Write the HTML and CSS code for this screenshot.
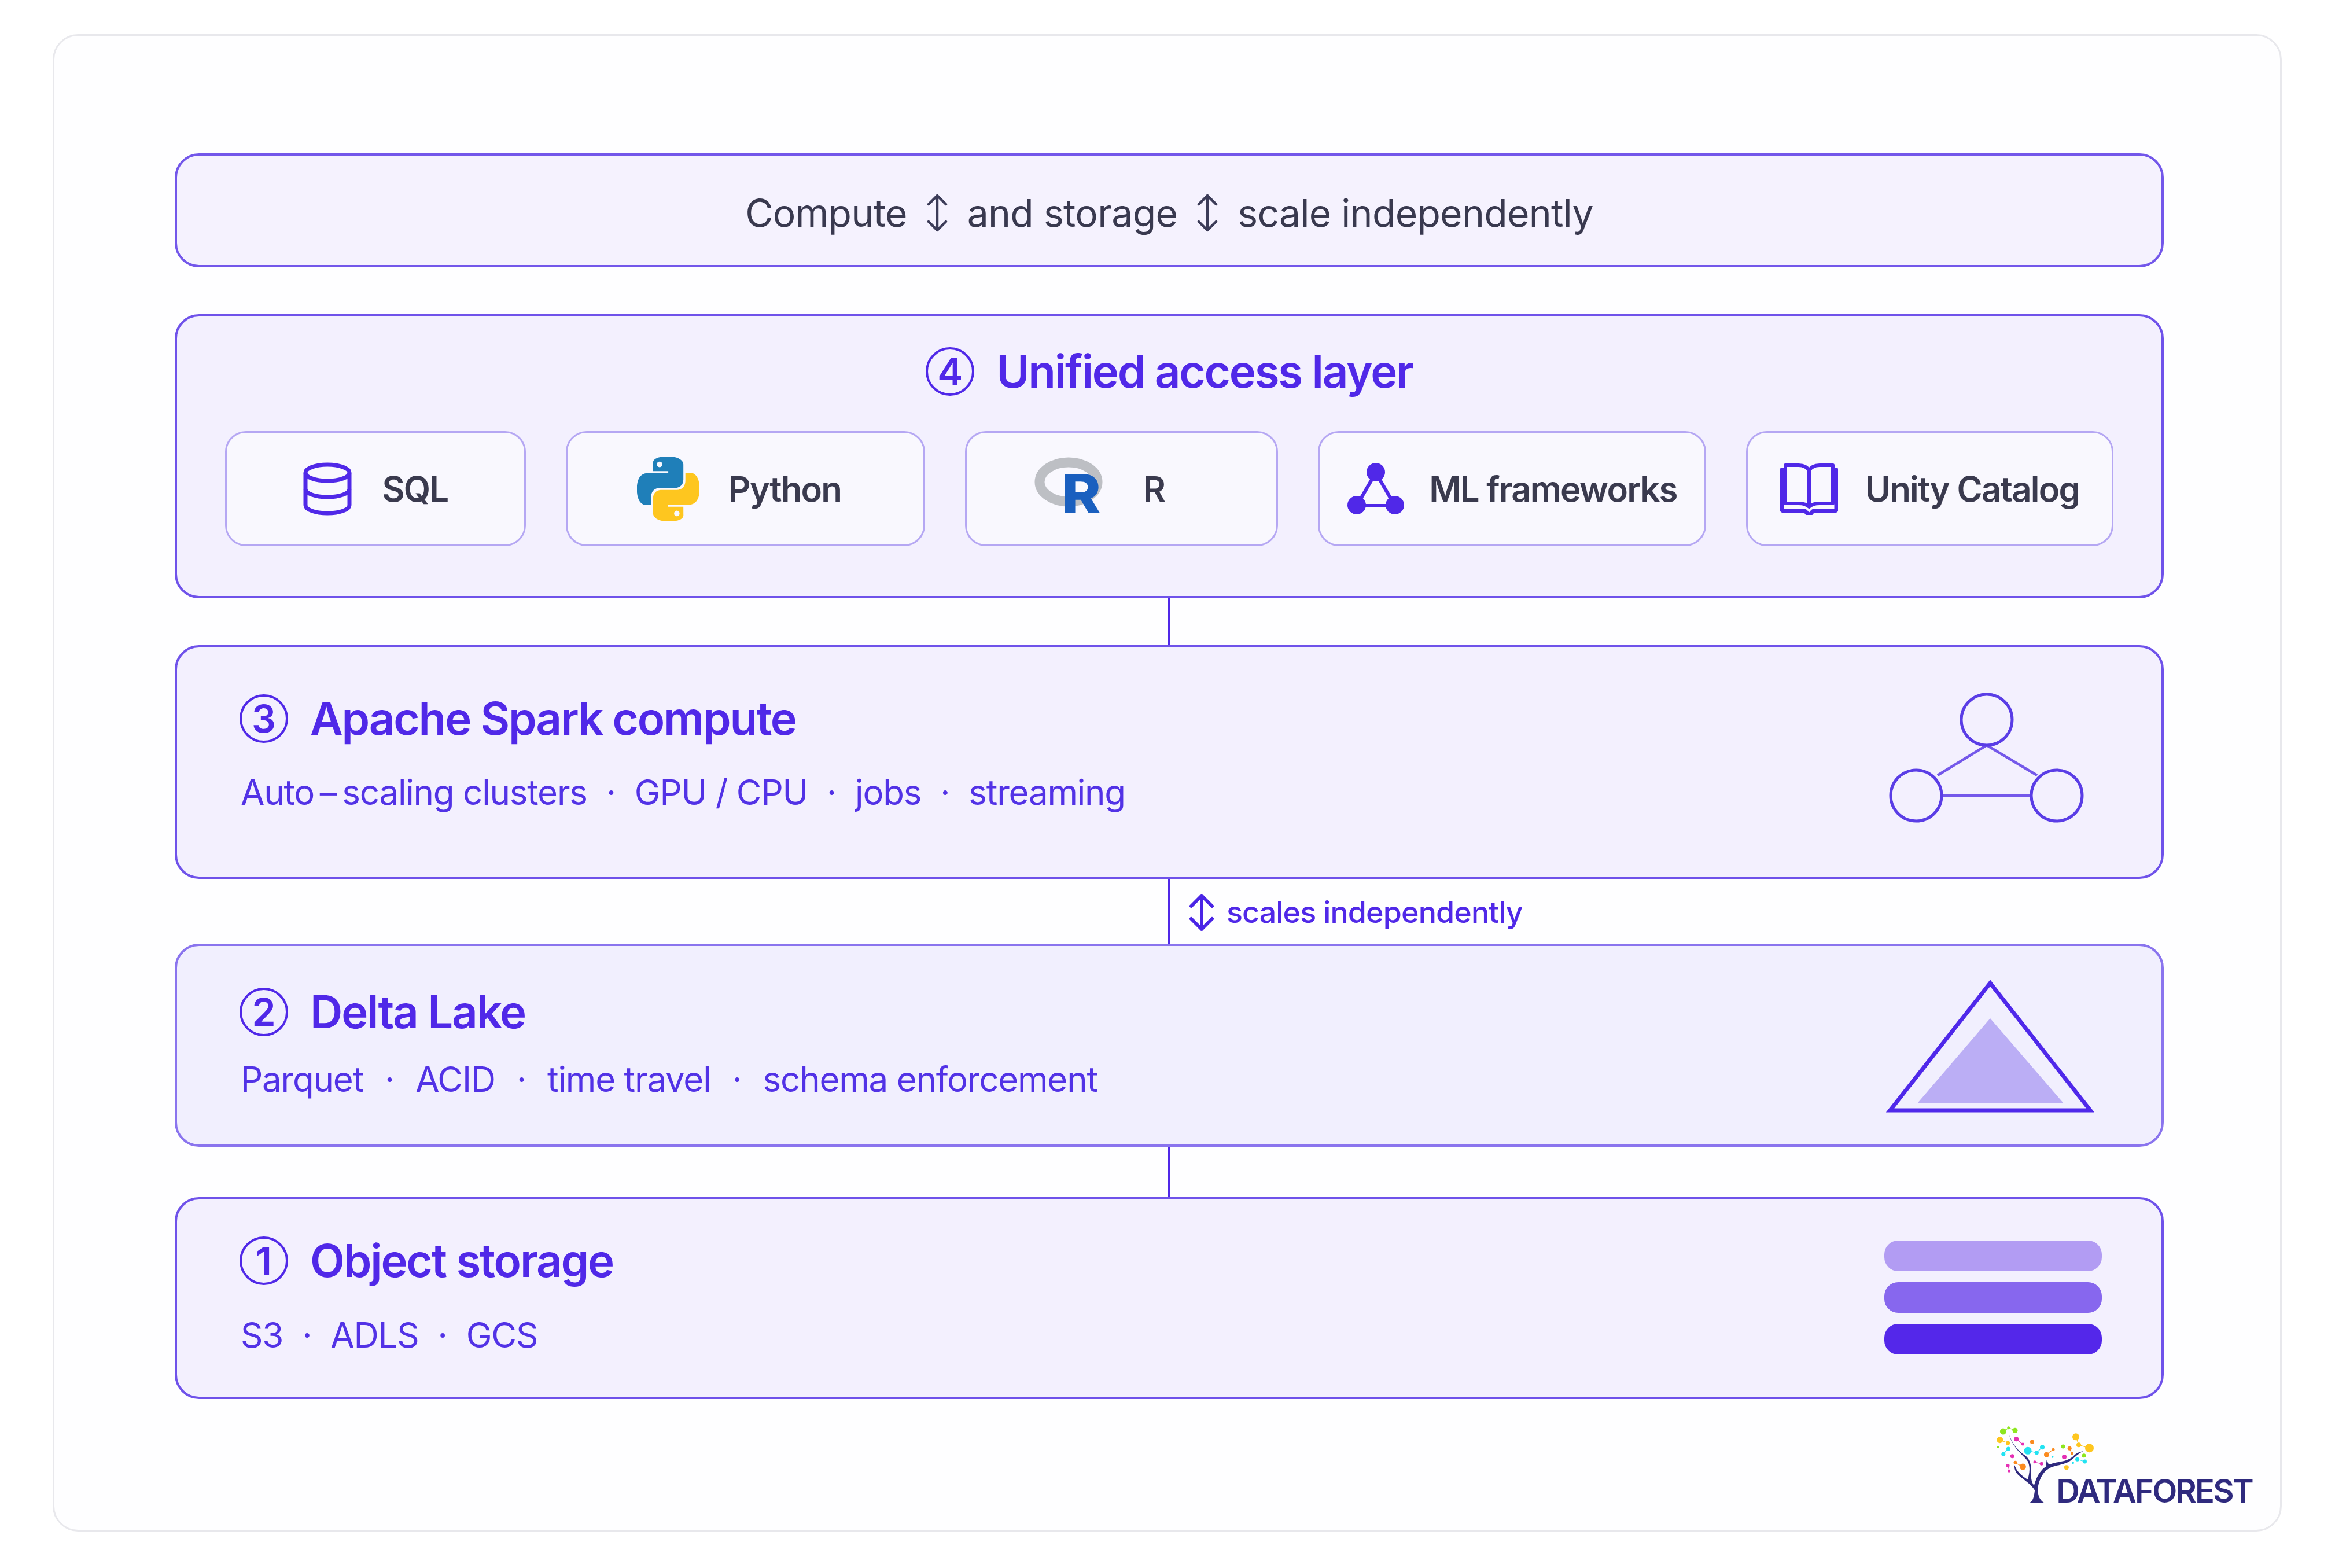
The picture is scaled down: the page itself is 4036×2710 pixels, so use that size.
FILE: index.html
```html
<!DOCTYPE html>
<html lang="en">
  <head>
    <meta charset="UTF-8" />
    <title>Lakehouse architecture</title>
    <link rel="stylesheet" href="styles.css">
  </head>
  <body>
    <main class="card">
      <div class="stack">
        <div class="banner">
          <span>Compute</span>
          <svg class="arrow-dark" viewBox="0 0 36 66"><path d="M18 3V63M3 18L18 3L33 18M3 48L18 63L33 48" /></svg>
          <span>and storage</span>
          <svg class="arrow-dark" viewBox="0 0 36 66"><path d="M18 3V63M3 18L18 3L33 18M3 48L18 63L33 48" /></svg>
          <span>scale independently</span>
        </div>

        <!-- 4 access layer -->
        <section class="layer layer-access">
          <div class="layer-title centered">
            <span class="step">4</span>
            <h2>Unified access layer</h2>
          </div>
          <div class="chips">
            <div class="chip chip-sql">
              <svg class="icon-db" viewBox="0 0 84 92">
                <ellipse cx="42" cy="18" rx="38" ry="14" />
                <path d="M4 18V74C4 82 21 88 42 88C63 88 80 82 80 74V18" />
                <path d="M4 46C4 54 21 60 42 60C63 60 80 54 80 46" />
              </svg>
              <span>SQL</span>
            </div>
            <div class="chip chip-python">
              <svg class="icon-python" viewBox="0 0 24 24" preserveAspectRatio="none">
                <path fill="#1f7fb9" fill-rule="evenodd" d="M14.25.18l.9.2.73.26.59.3.45.32.34.34.25.34.16.33.1.3.04.26.02.2-.01.13V8.5l-.05.63-.13.55-.21.46-.26.38-.3.31-.33.25-.35.19-.35.14-.33.1-.3.07-.26.04-.21.02H8.77l-.69.05-.59.14-.5.22-.41.27-.33.32-.27.35-.2.36-.15.37-.1.35-.07.32-.04.27-.02.21v3.06H3.17l-.21-.03-.28-.07-.32-.12-.35-.18-.36-.26-.36-.36-.35-.46-.32-.59-.28-.73-.21-.88-.14-1.05-.05-1.23.06-1.22.16-1.04.24-.87.32-.71.36-.57.4-.44.42-.33.42-.24.4-.16.36-.1.32-.05.24-.01h.16l.06.01h8.16v-.83H6.18l-.01-2.75-.02-.37.05-.34.11-.31.17-.28.25-.26.31-.23.38-.2.44-.18.51-.15.58-.12.64-.1.71-.06.77-.04.84-.02 1.27.05zm-6.3 1.98l-.23.33-.08.41.08.41.23.34.33.22.41.09.41-.09.33-.22.23-.34.08-.41-.08-.41-.23-.33-.33-.22-.41-.09-.41.09z" />
                <path fill="#fec61f" fill-rule="evenodd" d="M21.04 6.11l.28.06.32.12.35.18.36.27.36.35.35.47.32.59.28.73.21.88.14 1.04.05 1.23-.06 1.23-.16 1.04-.24.86-.32.71-.36.57-.4.45-.42.33-.42.24-.4.16-.36.09-.32.05-.24.02-.16-.01h-8.22v.82h5.84l.01 2.76.02.36-.05.34-.11.31-.17.29-.25.25-.31.24-.38.2-.44.17-.51.15-.58.13-.64.09-.71.07-.77.04-.84.01-1.27-.04-1.07-.14-.9-.2-.73-.25-.59-.3-.45-.33-.34-.34-.25-.34-.16-.33-.1-.3-.04-.25-.02-.2.01-.13v-5.34l.05-.64.13-.54.21-.46.26-.38.3-.32.33-.24.35-.2.35-.14.33-.1.3-.06.26-.04.21-.02.13-.01h5.84l.69-.05.59-.14.5-.21.41-.28.33-.32.27-.35.2-.36.15-.36.1-.35.07-.32.04-.28.02-.21V6.07h2.09l.14.01zm-6.47 14.25l-.23.33-.08.41.08.41.23.33.33.23.41.08.41-.08.33-.23.23-.33.08-.41-.08-.41-.23-.33-.33-.23-.41-.08-.41.08z" />
              </svg>
              <span>Python</span>
            </div>
            <div class="chip chip-r">
              <svg class="icon-r" viewBox="0 0 118 96">
                <ellipse class="r-ring" cx="59" cy="42" rx="50" ry="34" />
                <text class="r-letter" x="47" y="96" textLength="68" lengthAdjust="spacingAndGlyphs">R</text>
              </svg>
              <span>R</span>
            </div>
            <div class="chip chip-ml">
              <svg class="icon-ml" viewBox="0 0 100 90">
                <path d="M50 17L17 74H83Z" />
                <circle cx="50" cy="16" r="16" />
                <circle cx="17" cy="73" r="16" />
                <circle cx="83" cy="73" r="16" />
              </svg>
              <span>ML frameworks</span>
            </div>
            <div class="chip chip-unity">
              <svg class="icon-book" viewBox="0 0 100 90">
                <path class="book-back" d="M9 12H3V80C3 82 4 83 6 83H42C45 83 46 89 50 89C54 89 55 83 58 83H94C96 83 97 82 97 80V12H91" />
                <path d="M9 4H32C41 4 47 8 50 13C53 8 59 4 68 4H91V70H68C59 70 54 72 50 76C46 72 41 70 32 70H9Z" />
                <path d="M50 13V76" />
              </svg>
              <span>Unity Catalog</span>
            </div>
          </div>
        </section>

        <div class="link link-access"><i></i></div>

        <!-- 3 compute -->
        <section class="layer layer-spark">
          <div>
            <div class="layer-title">
              <span class="step">3</span>
              <h2>Apache Spark compute</h2>
            </div>
            <p class="layer-sub">Auto&#8201;–&#8201;scaling clusters<b>·</b>GPU / CPU<b>·</b>jobs<b>·</b>streaming</p>
          </div>
          <svg class="art-spark" viewBox="0 0 344 230">
            <path class="spark-line" d="M172 92L87 144M172 92L259 144M95 179H248" />
            <circle cx="172" cy="48" r="44" />
            <circle cx="50" cy="179" r="44" />
            <circle cx="293" cy="179" r="44" />
          </svg>
        </section>

        <div class="link link-scale">
          <i></i>
          <div class="scale-note">
            <svg viewBox="0 0 42 64"><path d="M21 3V61M3 21L21 3L39 21M3 43L21 61L39 43" /></svg>
            <span>scales independently</span>
          </div>
        </div>

        <!-- 2 delta -->
        <section class="layer layer-delta">
          <div>
            <div class="layer-title">
              <span class="step">2</span>
              <h2>Delta Lake</h2>
            </div>
            <p class="layer-sub">Parquet<b>·</b>ACID<b>·</b>time travel<b>·</b>schema enforcement</p>
          </div>
          <svg class="art-delta" viewBox="0 0 362 232">
            <path class="delta-inner" d="M181 67L55 214H308Z" />
            <path class="delta-outer" d="M181 6L8 226H354Z" />
          </svg>
        </section>

        <div class="link link-storage"><i></i></div>

        <!-- 1 storage -->
        <section class="layer layer-storage">
          <div>
            <div class="layer-title">
              <span class="step">1</span>
              <h2>Object storage</h2>
            </div>
            <p class="layer-sub">S3<b>·</b>ADLS<b>·</b>GCS</p>
          </div>
          <div class="bars">
            <div class="bar bar-light"></div>
            <div class="bar bar-mid"></div>
            <div class="bar bar-dark"></div>
          </div>
        </section>
      </div>

      <div class="brand">
        <div class="brand-logo">
          <svg class="brand-tree" viewBox="0 0 172 135">
            <g class="tree-links">
              <path stroke="#8ee61f" d="M13 10L23 4L34 8" />
              <path stroke="#fec61f" d="M8 25L22 30M139 19L144 33L162 39" />
              <path stroke="#e52fb4" d="M36 23L47 32M68 63L80 66M22 69L24 78" />
              <path stroke="#22e3f2" d="M22 40L14 49M56 43L71 47L81 37M141 58L154 62" />
              <path stroke="#fb8a1e" d="M88 50L100 41M128 39L132 48M34 64L47 71" />
            </g>
            <g fill="#8ee61f"><circle cx="13.4" cy="10" r="5.5" /><circle cx="22.8" cy="3.7" r="2.5" /><circle cx="34" cy="8.3" r="4.5" /><circle cx="4.7" cy="37.3" r="2" /><circle cx="117" cy="36" r="3.5" /><circle cx="153" cy="51.7" r="3.5" /></g>
            <g fill="#fec61f"><circle cx="7.8" cy="24.7" r="5.5" /><circle cx="21.6" cy="30" r="3.5" /><circle cx="139" cy="19.3" r="6" /><circle cx="144" cy="33.3" r="4" /><circle cx="162.5" cy="38.7" r="7.5" /><circle cx="122.8" cy="72.3" r="4" /></g>
            <g fill="#e52fb4"><circle cx="36.2" cy="23.3" r="4" /><circle cx="47.4" cy="32" r="2.5" /><circle cx="29.3" cy="52.7" r="3.5" /><circle cx="119" cy="54" r="4" /><circle cx="68" cy="62.7" r="2.5" /><circle cx="79.7" cy="65.7" r="3" /><circle cx="21.6" cy="69" r="3" /><circle cx="23.7" cy="78.3" r="2.5" /></g>
            <g fill="#22e3f2"><circle cx="22.4" cy="40" r="3.5" /><circle cx="13.8" cy="49.3" r="3.5" /><circle cx="56" cy="43.3" r="6.5" /><circle cx="71.4" cy="46.7" r="3.5" /><circle cx="81" cy="37.3" r="4" /><circle cx="98.7" cy="54" r="1.8" /><circle cx="141.5" cy="58.3" r="3.5" /><circle cx="154.5" cy="62" r="3.5" /><circle cx="134" cy="64.3" r="2" /></g>
            <g fill="#fb8a1e"><circle cx="63.4" cy="28" r="3.5" /><circle cx="88.4" cy="50.3" r="4.5" /><circle cx="100" cy="41.3" r="2.5" /><circle cx="128.2" cy="39.3" r="3.5" /><circle cx="132.5" cy="48" r="2.5" /><circle cx="34.5" cy="63.7" r="3" /><circle cx="47.4" cy="71" r="5.5" /></g>
            <g transform="scale(.431 .3333) translate(-200 -130)">
              <path fill="#2f2a7e" d="M335 530C350 525 355 500 358 465C345 440 330 425 300 395C280 375 275 355 277 335C285 365 300 385 330 410C335 380 342 350 330 315C315 285 270 250 255 175C270 230 290 260 320 285C340 305 345 340 343 370C342 400 345 425 355 440C365 400 375 365 405 340C403 330 404 320 406 308C410 320 412 328 415 332C445 315 490 320 515 285C525 272 540 265 553 263C530 275 520 295 500 312C480 330 445 335 420 348C395 365 380 395 372 440C368 480 372 510 395 530Z" />
            </g>
          </svg>
          <span class="brand-name">DATAFOREST</span>
        </div>
      </div>
    </main>
  </body>
</html>
```

FILE: styles.css
```css
html,
body {
  margin: 0;
  background-color: #fff;
  font-family: Inter, "Noto Sans", sans-serif;
}

.card {
  margin: 59px 92px 0 91px;
  height: 2588px;
  box-sizing: border-box;
  border: 3px solid #e8e8ec;
  border-radius: 44px;
  background-color: #fefeff;
  display: flex;
  flex-flow: column;
}

.stack {
  margin: 203px 201px 0 208px;
  display: flex;
  flex-flow: column;
}

.banner {
  height: 197px;
  box-sizing: border-box;
  margin-bottom: 81px;
  border: 4px solid #7357ea;
  border-radius: 42px;
  background-color: #f5f2fe;
  display: flex;
  align-items: center;
  justify-content: center;
  font-size: 66px;
  letter-spacing: -0.7px;
  color: #39394f;
  padding-top: 8px;
}
.arrow-dark {
  width: 36px;
  height: 66px;
  margin: 0 34px;
}
.arrow-dark path {
  fill: none;
  stroke: #3c3c58;
  stroke-width: 4.5;
  stroke-linecap: round;
  stroke-linejoin: round;
}

/* layers */
.layer {
  box-sizing: border-box;
  border: 4px solid #6f52ea;
  border-radius: 42px;
  background-color: #f3f0fe;
  display: flex;
  justify-content: space-between;
  align-items: flex-start;
}
.layer-access {
  height: 491px;
  display: block;
  padding: 53px 83px 0;
}
.layer-spark {
  height: 404px;
  padding: 81px 130px 0 108px;
}
.layer-delta {
  height: 351px;
  padding: 72px 115px 0 108px;
  border-color: #8a74ee;
  background-color: #f1effe;
}
.layer-storage {
  height: 349px;
  padding: 64px 103px 0 108px;
}

.layer-title {
  display: flex;
  align-items: center;
  gap: 38px;
  color: #5028e8;
}
.layer-title.centered {
  justify-content: center;
}
.layer-title h2 {
  margin: 0;
  font-size: 78px;
  font-weight: 600;
  line-height: 84px;
  letter-spacing: -2.2px;
}
.step {
  width: 84px;
  height: 84px;
  box-sizing: border-box;
  border: 4px solid #5028e8;
  border-radius: 50%;
  display: flex;
  align-items: center;
  justify-content: center;
  font-size: 66px;
  font-weight: 600;
}
.layer-sub {
  margin: 0;
  font-size: 60px;
  letter-spacing: -1.2px;
  line-height: 76px;
  color: #5232e6;
  padding-left: 2px;
}
.layer-sub b {
  font-weight: 400;
  margin: 0 33px;
}
.layer-spark .layer-sub {
  margin-top: 47px;
}
.layer-delta .layer-sub {
  margin-top: 36px;
}
.layer-delta .layer-sub b {
  margin: 0 37px;
}
.layer-storage .layer-sub {
  margin-top: 48px;
}

/* connectors */
.link {
  display: grid;
  grid-template-columns: 1fr 4px 1fr;
}
.link i {
  grid-column: 2;
  background-color: #5028e8;
}
.link-access {
  height: 81px;
}
.link-scale {
  height: 112px;
}
.link-storage {
  height: 87px;
}
.scale-note {
  grid-column: 3;
  padding-left: 33px;
  padding-top: 3px;
  display: flex;
  align-items: center;
  gap: 22px;
  font-size: 52px;
  letter-spacing: -0.9px;
  font-weight: 500;
  color: #5028e8;
}
.scale-note svg {
  width: 42px;
  height: 64px;
}
.scale-note path {
  fill: none;
  stroke: #4a24e6;
  stroke-width: 6;
  stroke-linecap: round;
  stroke-linejoin: round;
}

/* chips */
.chips {
  margin-top: 61px;
  display: grid;
  grid-template-columns: 520px 621px 541px 671px 635px;
  gap: 69px;
}
.chip {
  height: 199px;
  box-sizing: border-box;
  border: 3px solid #b5a7f3;
  border-radius: 36px;
  background-color: #f9f8fe;
  display: flex;
  align-items: center;
  justify-content: center;
  font-size: 60px;
  font-weight: 600;
  letter-spacing: -1.8px;
  color: #3a3a4e;
}
.chip-sql {
  gap: 53px;
}
.chip-python {
  gap: 50px;
  padding-right: 22px;
}
.chip-r {
  gap: 70px;
  padding-right: 76px;
}
.chip-ml {
  gap: 42px;
}
.chip-unity {
  gap: 47px;
}
.icon-db {
  width: 84px;
  height: 92px;
}
.icon-db ellipse,
.icon-db path {
  fill: none;
  stroke: #5028e8;
  stroke-width: 7;
}
.icon-python {
  width: 108px;
  height: 112px;
}
.icon-r {
  width: 118px;
  height: 96px;
  overflow: visible;
  margin-bottom: 12px;
}
.r-ring {
  fill: none;
  stroke: #bdbfc4;
  stroke-width: 17;
}
.r-letter {
  font-family: Inter, sans-serif;
  font-size: 94px;
  font-weight: 800;
  letter-spacing: 0;
  fill: #1a5fbf;
}
.icon-ml {
  width: 100px;
  height: 90px;
}
.icon-ml path {
  fill: none;
  stroke: #5028e8;
  stroke-width: 6;
}
.icon-ml circle {
  fill: #5028e8;
}
.icon-book {
  width: 100px;
  height: 90px;
}
.icon-book path {
  fill: none;
  stroke: #5028e8;
  stroke-width: 6;
  stroke-linejoin: round;
}
.icon-book .book-back {
  stroke-width: 7;
}

/* art on the right of each layer */
.art-spark {
  width: 344px;
  height: 230px;
  margin-top: -4px;
}
.art-spark circle {
  fill: none;
  stroke: #5a3de6;
  stroke-width: 5;
}
.spark-line {
  fill: none;
  stroke: #7458ea;
  stroke-width: 4.5;
}
.art-delta {
  width: 362px;
  height: 232px;
  margin-top: -14px;
}
.delta-outer {
  fill: none;
  stroke: #4f28ea;
  stroke-width: 7;
}
.delta-inner {
  fill: #bbaef5;
}
.bars {
  width: 376px;
  margin-top: 7px;
  display: flex;
  flex-flow: column;
  gap: 19px;
}
.bar {
  height: 53px;
  border-radius: 24px;
}
.bar-light {
  background-color: #b29cf3;
}
.bar-mid {
  background-color: #8767ee;
}
.bar-dark {
  background-color: #5427ea;
}

/* logo */
.brand {
  margin-top: 46px;
  padding-right: 48px;
  display: flex;
  justify-content: flex-end;
}
.brand-logo {
  width: 444px;
  height: 135px;
  display: grid;
}
.brand-logo > * {
  grid-area: 1 / 1;
}
.brand-tree {
  width: 172px;
  height: 135px;
}
.tree-links path {
  fill: none;
  stroke-width: 1.2;
}
.brand-name {
  justify-self: end;
  align-self: end;
  font-size: 56px;
  line-height: 44px;
  font-weight: 600;
  letter-spacing: -2.8px;
  color: #2f2a7e;
}
```
